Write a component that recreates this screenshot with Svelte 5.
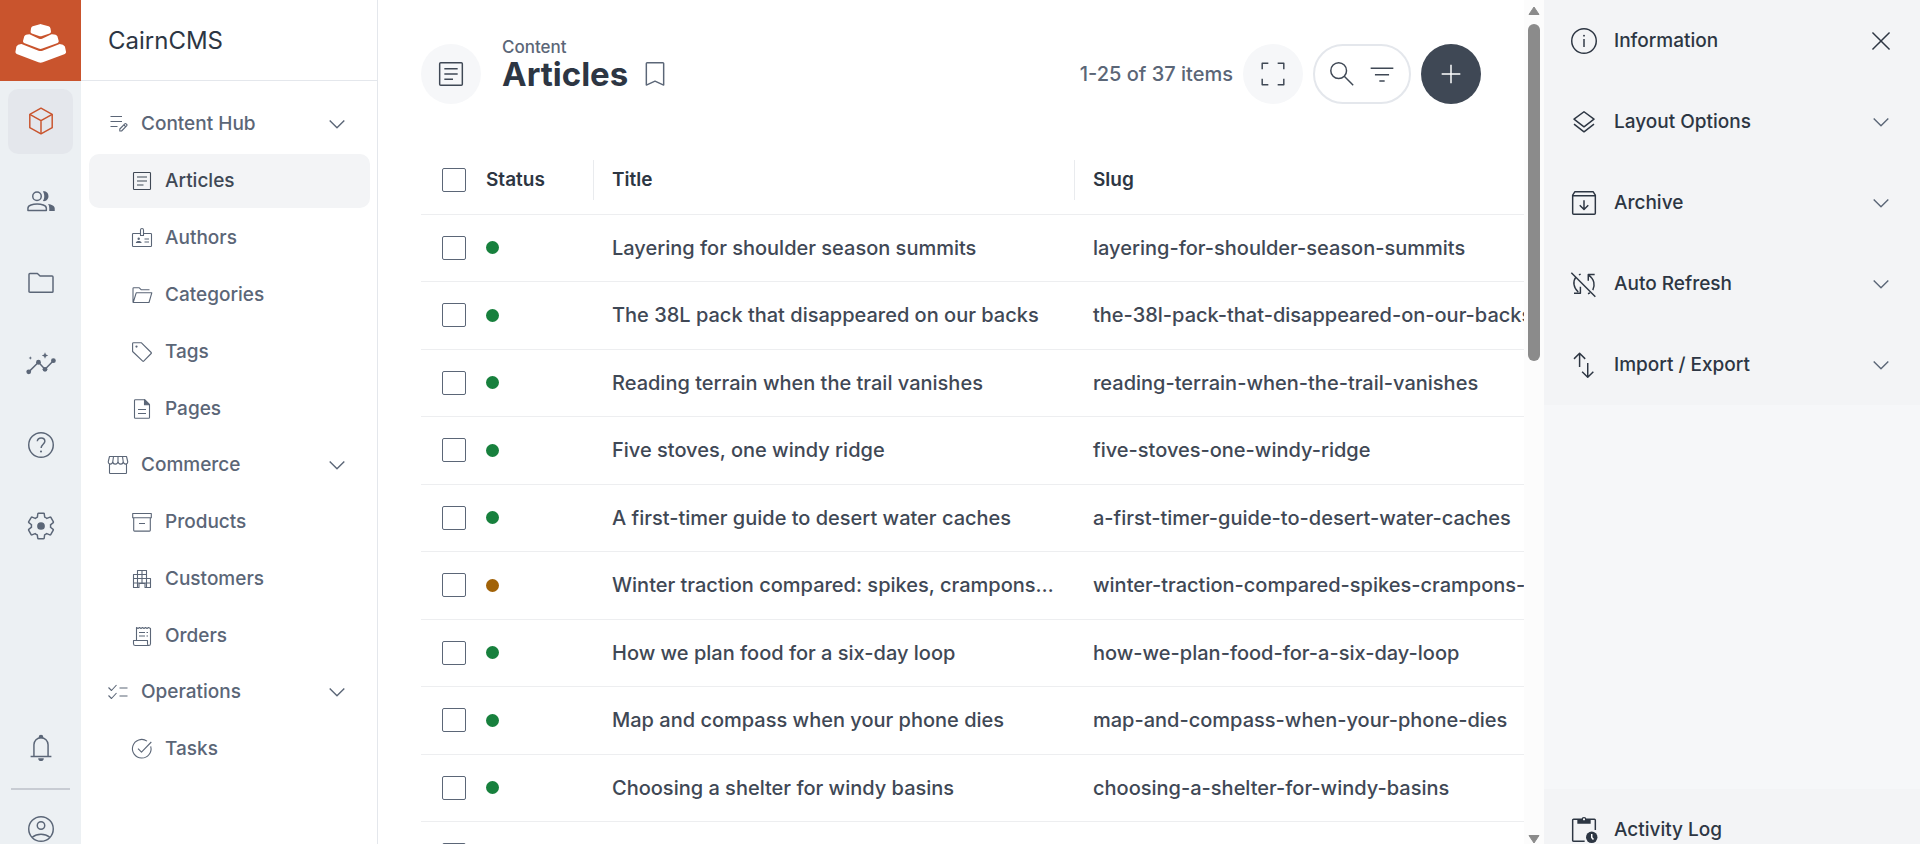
<script>
  const icons = {
    box: '<path d="M12 2.4 20.4 7v10L12 21.6 3.6 17V7z"/><path d="M3.6 7 12 11.8 20.4 7M12 11.8v9.8"/>',
    people:
      '<circle cx="9" cy="7.7" r="3.2"/><path d="M2.2 18.3v-1.7c0-2.2 3.8-3.1 6.9-3.1s6.9.9 6.9 3.1v1.7z"/><g fill="currentColor" stroke="none"><path d="M17.3 13.5c2.7.4 5 1.4 5 3.3v2h-4.1v-2.3c0-1.2-.3-2.2-.9-3zM13.4 4.1c2.8-.5 4.2 1.6 4.2 3.6s-1.5 4.1-4.2 3.6c1.4-1.8 1.4-5.4 0-7.2z"/></g>',
    folder:
      '<path d="M3 5.6c0-.4.3-.7.7-.7h5.6l2 1.9h9c.4 0 .7.3.7.7v10.8c0 .4-.3.7-.7.7H3.7a.7.7 0 0 1-.7-.7z"/>',
    insights:
      '<path d="m2.8 17.9 7.3-7.2 4.9 5.3 6.3-6.5"/><g fill="currentColor" stroke="none"><circle cx="2.8" cy="17.9" r="1.8"/><circle cx="10.1" cy="10.7" r="1.8"/><circle cx="15" cy="16" r="1.8"/><circle cx="21.3" cy="9.5" r="1.8"/><path d="m15 3.2.7 1.7 1.7.7-1.7.7-.7 1.7-.7-1.7-1.7-.7 1.7-.7zM4 6.2l.4.9.9.4-.9.4-.4.9-.4-.9-.9-.4.9-.4z"/></g>',
    help: '<circle cx="12" cy="12" r="9.2"/><path d="M9.2 9.2c.2-1.6 1.3-2.5 2.9-2.5s2.8 1 2.8 2.5c0 2.1-2.8 2.4-2.8 5"/><circle cx="12" cy="16.9" r=".8" fill="currentColor" stroke="none"/>',
    settings:
      '<path d="M19.1 12.9c.1-.3.1-.6.1-.9s0-.6-.1-.9l2.1-1.6c.1-.2.2-.4.1-.6l-1.9-3.4c-.2-.2-.4-.2-.6-.2l-2.4 1c-.5-.4-1-.7-1.6-1l-.4-2.5c0-.2-.2-.4-.5-.4h-3.8c-.2 0-.4.2-.5.4l-.3 2.5c-.6.3-1.2.6-1.6 1l-2.4-1c-.3 0-.5 0-.6.2L2.7 8.9c-.1.2 0 .4.2.6l2 1.6c-.1.3-.1.6-.1.9s0 .6.1.9l-2.1 1.6c-.1.2-.2.4-.1.6l1.9 3.4c.2.2.4.2.6.2l2.4-1c.5.4 1 .7 1.6 1l.4 2.5c0 .2.2.4.5.4h3.8c.3 0 .4-.2.5-.4l.3-2.5c.6-.3 1.2-.6 1.6-1l2.4 1c.3 0 .5 0 .6-.2l1.9-3.4c.1-.2.1-.4-.1-.6z"/><circle cx="12" cy="12" r="2.9" fill="currentColor" stroke="none"/>',
    bell: '<path d="M4.2 18.3h15.6M6.7 18.3V9.6a5.3 5.3 0 0 1 10.6 0v8.7"/><g fill="currentColor" stroke="none"><path d="M10.3 4.6v-.8a1.7 1.7 0 0 1 3.4 0v.8zM9.9 19.7h4.2a2.1 2.1 0 0 1-4.2 0z"/></g>',
    account:
      '<circle cx="12" cy="12" r="9.2"/><circle cx="12" cy="9.4" r="2.8"/><path d="M5.4 18.2c3.8-3 9.4-3 13.2 0"/>',
    editNote:
      '<path d="M4.5 4.5H16M4.5 9.5H16M4.5 14.5h7"/><path d="M13.8 19v-2l5-5.2a.9.9 0 0 1 1.3 0l.7.7c.3.3.3.8 0 1.1L15.6 19zM18 13l1.8 1.8"/>',
    article:
      '<rect x="3.5" y="3.5" width="17" height="17" rx=".8"/><path d="M7 8h10M7 12h10M7 16h6.5"/>',
    badge:
      '<path d="M10.5 7.5H3.3c-.4 0-.8.4-.8.8v11.4c0 .4.4.8.8.8h17.4c.4 0 .8-.4.8-.8V8.3c0-.4-.4-.8-.8-.8h-7.2"/><path d="M10.5 9.5V4c0-2 3-2 3 0v5.5zM14.5 13H19M14.5 16H19"/><g fill="currentColor" stroke="none"><circle cx="8.7" cy="12.8" r="1.2"/><path d="M5.8 17c.2-2.6 5.6-2.6 5.8 0z"/></g>',
    folderOpen:
      '<path d="M3 19.2V5.5c0-.5.3-.7.7-.7h5.6l2 2h8.2M3.2 19.5l3-9.7h15.6l-2.8 9.7z"/>',
    tag: '<path d="M2.6 11.5V3.6c0-.5.4-.9.9-.9h7.7l10 9.8c.3.3.3.7 0 1l-7.5 7.6c-.3.3-.7.3-1 0z"/><circle cx="6.5" cy="6.6" r="1.1" fill="currentColor" stroke="none"/>',
    page: '<path d="M14.5 2.7H5.3c-.5 0-.8.3-.8.8v17c0 .5.3.8.8.8h13.4c.5 0 .8-.3.8-.8V7.7zM8 12.5h8M8 16.5h8"/><path d="M14.5 2.7v5h5z" fill="currentColor"/>',
    store:
      '<path d="M3.5 10.5v9.3c0 .4.3.7.7.7h15.6c.4 0 .7-.3.7-.7v-9.3M3.5 3.5h17l1.2 5c.3 3.5-4 3.5-4.5 0 0 3.5-4.9 3.5-5.2 0-.3 3.5-5.2 3.5-5.2 0-.5 3.5-4.8 3.5-4.5 0zM7.5 3.5l-.7 5M12 3.5v5M16.5 3.5l.7 5"/>',
    archiveBox:
      '<path d="M2.7 3.5h18.6v4.2H2.7zM3.7 7.7v12.6c0 .5.3.8.8.8h15c.5 0 .8-.3.8-.8V7.7M9 13.5h6"/>',
    city: '<path d="M3.5 20.5v-13h4v-4h9v8h4v9H15v-4H9v4zM7.5 7.5h9M3.5 11.5h13M3.5 16h17M7.5 7.5v13M12 3.5v13M16.5 11.5v9"/>',
    receipt:
      '<path d="M6.5 16.5v-13l1.5 1 1.5-1 1.5 1 1.5-1 1.5 1 1.5-1 1.5 1 1.5-1 2 1v15.2c0 .9-.7 1.8-1.8 1.8H5.3c-1 0-1.8-.8-1.8-1.8v-3.2h14v3.2c0 1 .6 1.8 1.5 1.8M9 8.5h6M9 12h6M16.5 8.5H18M16.5 12H18"/>',
    checklist: '<path d="m2.5 7.5 3 3 5-5.5M2.5 15.5l3 3 5-5.5M13.5 8h8M13.5 16h8"/>',
    taskAlt: '<path d="M20.7 9.3A9.3 9.3 0 1 1 17 4.1M8 11.7l3.5 3.5L21.3 5"/>',
    chevron: '<path stroke-width="1.4" d="m4.7 8.500 7.300 7.300 7.300-7.300"/>',
    close: '<path d="m5.6 5.6 12.8 12.8M18.4 5.6 5.6 18.4"/>',
    bookmark: '<path d="M5.5 20.3V4.1c0-.4.2-.6.6-.6h11.8c.4 0 .6.2.6.6v16.2L12 17.4z"/>',
    fullscreen:
      '<path d="M3.9 8.5V3.9h4.6M15.5 3.9h4.6v4.6M20.1 15.5v4.6h-4.6M8.5 20.1H3.9v-4.6"/>',
    search: '<circle cx="9.5" cy="9.5" r="5.9"/><path d="m13.7 13.7 6.7 6.7"/>',
    filter: '<path d="M3.5 7.7h17M6.7 12.5h10.6M10 17.3h4"/>',
    plus: '<path d="M12 5v14M5 12h14"/>',
    info: '<circle cx="12" cy="12" r="9.2"/><path d="M12 10.5v6"/><circle cx="12" cy="8" r=".7" fill="currentColor" stroke="none"/>',
    layers: '<path d="m12 4.3 7.5 5.6-7.5 5.7-7.5-5.7zM4.5 13.6l7.5 5.8 7.5-5.8"/>',
    archive:
      '<path d="M5.2 3.5h13.6l1.7 2.6v13.6c0 .5-.3.8-.8.8H4.3c-.5 0-.8-.3-.8-.8V6.1zM3.5 6.6h17M12 10v6.8M8.8 13.7l3.2 3.2 3.2-3.2"/>',
    syncOff:
      '<path d="m2.5 3.5 18 18M5.9 6.8C3.5 10 4 14.7 7.7 18M4.5 18.9h4.8V14M9.5 4.6l-1.3.6M20 4.9h-4.8v4.6M15.4 5.3c4.5 3 5 7.7 3.2 11.3M16.5 18.6l-1.5.7"/>',
    swap: '<path d="M8.7 13.5V3.2M4.5 7.4l4.2-4.2 4.2 4.2M14.8 10.5v10.7M10.6 17l4.2 4.2L19 17"/>',
    activity:
      '<path d="M12.5 20.5H4.2c-.4 0-.7-.3-.7-.7V4.7c0-.4.3-.7.7-.7h15.6c.4 0 .7.3.7.7V12"/><g fill="currentColor" stroke="none"><path d="M7 4h3.2a1.8 1.8 0 0 1 3.6 0H17v3.4H7z"/><circle cx="17.8" cy="17.5" r="4.3"/></g><circle cx="12" cy="4" r=".8" fill="#fff" stroke="none"/><path d="M17.8 15v2.7l1.3 1.5" stroke="#fff"/>'
  };

  const modules = [
    { icon: 'box', label: 'Content', active: true },
    { icon: 'people', label: 'User Directory' },
    { icon: 'folder', label: 'File Library' },
    { icon: 'insights', label: 'Insights' },
    { icon: 'help', label: 'Documentation' },
    { icon: 'settings', label: 'Settings' }
  ];

  const groups = [
    {
      label: 'Content Hub',
      icon: 'editNote',
      items: [
        { label: 'Articles', icon: 'article', active: true },
        { label: 'Authors', icon: 'badge' },
        { label: 'Categories', icon: 'folderOpen' },
        { label: 'Tags', icon: 'tag' },
        { label: 'Pages', icon: 'page' }
      ]
    },
    {
      label: 'Commerce',
      icon: 'store',
      items: [
        { label: 'Products', icon: 'archiveBox' },
        { label: 'Customers', icon: 'city' },
        { label: 'Orders', icon: 'receipt' }
      ]
    },
    {
      label: 'Operations',
      icon: 'checklist',
      items: [{ label: 'Tasks', icon: 'taskAlt' }]
    }
  ];

  const rows = [
    { title: 'Layering for shoulder season summits', slug: 'layering-for-shoulder-season-summits' },
    { title: 'The 38L pack that disappeared on our backs', slug: 'the-38l-pack-that-disappeared-on-our-backs' },
    { title: 'Reading terrain when the trail vanishes', slug: 'reading-terrain-when-the-trail-vanishes' },
    { title: 'Five stoves, one windy ridge', slug: 'five-stoves-one-windy-ridge' },
    { title: 'A first-timer guide to desert water caches', slug: 'a-first-timer-guide-to-desert-water-caches' },
    {
      title: 'Winter traction compared: spikes, crampons, snowshoes',
      slug: 'winter-traction-compared-spikes-crampons-snowshoes',
      draft: true
    },
    { title: 'How we plan food for a six-day loop', slug: 'how-we-plan-food-for-a-six-day-loop' },
    { title: 'Map and compass when your phone dies', slug: 'map-and-compass-when-your-phone-dies' },
    { title: 'Choosing a shelter for windy basins', slug: 'choosing-a-shelter-for-windy-basins' },
    { title: '', slug: '' }
  ];

  const panels = [
    { label: 'Information', icon: 'info' },
    { label: 'Layout Options', icon: 'layers' },
    { label: 'Archive', icon: 'archive' },
    { label: 'Auto Refresh', icon: 'syncOff' },
    { label: 'Import / Export', icon: 'swap' }
  ];

  let closed = $state({});
  let selected = $state(rows.map(() => false));
  let allSelected = $derived(selected.every(Boolean));

  function toggleAll(e) {
    const checked = e.currentTarget.checked;
    selected = rows.map(() => checked);
  }
</script>

{#snippet icon(name, size = 32)}
  <svg class="icon" width={size} height={size} viewBox="0 0 24 24" aria-hidden="true">
    {@html icons[name]}
  </svg>
{/snippet}

<div class="app">
  <aside class="module-bar">
    <a class="logo" href="#home" aria-label="Home">
      <svg width="81" height="81" viewBox="0 0 81 81" aria-hidden="true">
        <path d="M39 24.4q1.5-.6 3 0l6.6 1.8q1.6.5 1.9 2.2l.5 3q.1 1.5-1.3 2l-7.7 2.6q-1.5.4-3 0l-7.2-2.6q-1.4-.5-1.2-2l.4-3q.3-1.7 1.7-2.2z" />
        <path d="m29.5 34.3 9.5 4.4q1.5.7 3 0l9.5-4.4q4.8-.2 5.9 2l1.3 4.7q.3 1.3-1 1.9L42.3 48.6q-1.8.7-3.6 0L24 42.9q-1.2-.6-1-1.9l1.2-4.5q1-2.2 5.3-2.2z" />
        <path d="m21.5 44.1 17 6.6q2 .7 4 0l17.2-6.6q3.8 0 5.2 2.5l1.2 5.4q0 1.3-1.2 1.900L42.800 62.300q-2.200.9-4.400 0L16.700 53.900q-1.300-.6-1.300-1.900l1-5.400q1.300-2.600 5.100-2.500z" />
      </svg>
    </a>
    <nav class="modules">
      {#each modules as mod}
        <a class="module" class:active={mod.active} href="#{mod.icon}" aria-label={mod.label}>
          {@render icon(mod.icon)}
        </a>
      {/each}
    </nav>
    <button class="bar-button" aria-label="Notifications">{@render icon('bell')}</button>
    <a class="bar-button profile" href="#profile" aria-label="Profile">{@render icon('account')}</a>
  </aside>

  <aside class="navigation">
    <header class="project">CairnCMS</header>
    <nav class="groups">
      {#each groups as group}
        <div class="group">
          <button class="nav-item" onclick={() => (closed[group.label] = !closed[group.label])}>
            {@render icon(group.icon, 24)}
            <span class="label">{group.label}</span>
            <span class="chevron" class:closed={closed[group.label]}>{@render icon('chevron', 24)}</span>
          </button>
          {#if !closed[group.label]}
            {#each group.items as item}
              <a class="nav-item child" class:active={item.active} href="#{item.label.toLowerCase()}">
                {@render icon(item.icon, 24)}
                <span class="label">{item.label}</span>
              </a>
            {/each}
          {/if}
        </div>
      {/each}
    </nav>
  </aside>

  <main class="content">
    <div class="page">
      <header class="header-bar">
        <span class="round">{@render icon('article')}</span>
        <div class="heading">
          <a class="breadcrumb" href="#content">Content</a>
          <h1>Articles</h1>
        </div>
        <button class="bookmark" aria-label="Bookmark">{@render icon('bookmark')}</button>
        <div class="actions">
          <span class="count">1-25 of 37 items</span>
          <button class="round" aria-label="Full screen">{@render icon('fullscreen')}</button>
          <div class="search">
            <button aria-label="Search">{@render icon('search')}</button>
            <button aria-label="Filter">{@render icon('filter')}</button>
          </div>
          <button class="round primary" aria-label="Create item">{@render icon('plus')}</button>
        </div>
      </header>

      <div class="table-wrap">
        <table>
          <colgroup>
            <col class="col-select" />
            <col class="col-status" />
            <col class="col-title" />
            <col />
          </colgroup>
          <thead>
            <tr>
              <th class="select">
                <input type="checkbox" aria-label="Select all" checked={allSelected} onchange={toggleAll} />
              </th>
              <th><span>Status</span></th>
              <th><span>Title</span></th>
              <th><span>Slug</span></th>
            </tr>
          </thead>
          <tbody>
            {#each rows as row, i}
              <tr>
                <td class="select">
                  <input type="checkbox" aria-label="Select row {i + 1}" bind:checked={selected[i]} />
                </td>
                <td><span class="dot" class:draft={row.draft}></span></td>
                <td>{row.title}</td>
                <td>{row.slug}</td>
              </tr>
            {/each}
          </tbody>
        </table>
      </div>
    </div>

    <div class="scrollbar" aria-hidden="true">
      <svg width="12" height="10" viewBox="0 0 12 10"><path d="M6 1 11 8.5H1z" /></svg>
      <div class="track"><div class="thumb"></div></div>
      <svg width="12" height="10" viewBox="0 0 12 10"><path d="M6 9 11 1.5H1z" /></svg>
    </div>
  </main>

  <aside class="sidebar">
    <div class="panels">
      {#each panels as panel, i}
        <div class="panel">
          <button class="panel-toggle">
            {@render icon(panel.icon)}
            <span class="label">{panel.label}</span>
            {#if i > 0}
              <span class="chevron">{@render icon('chevron', 24)}</span>
            {/if}
          </button>
          {#if i === 0}
            <button class="close" aria-label="Close sidebar">{@render icon('close')}</button>
          {/if}
        </div>
      {/each}
    </div>
    <div class="panel">
      <button class="panel-toggle">
        {@render icon('activity')}
        <span class="label">Activity Log</span>
      </button>
    </div>
  </aside>
</div>

<style>
  :global(body) {
    overflow: hidden;
  }

  .app {
    --text: #3f4855;
    --text-strong: #2d3643;
    --text-subdued: #5b6677;
    --line: #e4e7ec;
    --soft: #f3f4f6;

    display: flex;
    height: 100vh;
    font-family: Inter, "Liberation Sans", sans-serif;
    font-size: 20px;
    font-weight: 500;
    line-height: 28px;
    color: var(--text);
    background: #fff;
  }

  .app :where(button) {
    border: 0;
    padding: 0;
    background: none;
    font: inherit;
    color: inherit;
    cursor: pointer;
  }

  a {
    color: inherit;
    text-decoration: none;
  }

  .icon {
    display: block;
    flex-shrink: 0;
    fill: none;
    stroke: currentColor;
    stroke-width: 1.1;
    stroke-linejoin: round;
  }

  /* the last entry of both outer bars runs below the fold */
  .module-bar,
  .sidebar {
    height: calc(100vh + 26px);
    display: flex;
    flex-direction: column;
    flex-shrink: 0;
  }

  .module-bar {
    width: 81px;
    background: #ecf0f3;
    color: var(--text-subdued);
  }

  .logo {
    height: 81px;
    background: #c9542d;
    fill: #fff;
  }

  .logo svg {
    display: block;
  }

  .modules {
    flex: 1;
    display: flex;
    flex-direction: column;
    gap: 16px;
    padding: 8px;
  }

  .module {
    box-sizing: border-box;
    height: 65px;
    display: grid;
    place-items: center;
    padding-bottom: 1px;
    border-radius: 10px;
  }

  .module.active {
    background: #e4e7ec;
    color: #c9542d;
  }

  .module-bar .bar-button {
    box-sizing: border-box;
    height: 81px;
    display: grid;
    place-items: center;
    padding-bottom: 1px;
  }

  .profile {
    position: relative;
  }

  .profile::before {
    content: '';
    position: absolute;
    top: -1px;
    left: 11px;
    right: 11px;
    height: 2px;
    background: #c8ccd3;
  }

  .navigation {
    width: 296px;
    flex-shrink: 0;
    border-right: 1px solid var(--line);
    font-size: 19px;
    color: var(--text-subdued);
  }

  .project {
    box-sizing: border-box;
    height: 81px;
    display: flex;
    align-items: center;
    padding: 2px 0 0 27px;
    border-bottom: 1px solid var(--line);
    font-size: 24px;
    font-weight: 400;
    color: var(--text-strong);
  }

  .groups {
    display: flex;
    flex-direction: column;
    gap: 2px;
    padding: 16px 7px 0 8px;
  }

  .group {
    display: flex;
    flex-direction: column;
    gap: 3px;
  }

  .group .nav-item {
    height: 54px;
    display: flex;
    align-items: center;
    gap: 11px;
    padding: 0 21px 0 17px;
    border-radius: 10px;
    text-align: left;
  }

  .group .child {
    padding-left: 41px;
  }

  .nav-item.active {
    background: var(--soft);
    color: var(--text);
  }

  .label {
    flex: 1;
    text-align: left;
  }

  .chevron.closed {
    transform: rotate(90deg);
  }

  .content {
    flex: 1;
    min-width: 0;
    display: flex;
  }

  .page {
    flex: 1;
    min-width: 0;
    overflow: hidden;
    padding: 44px 0 0 43px;
  }

  .header-bar {
    display: flex;
    align-items: center;
    margin-bottom: 42px;
    padding-right: 43px;
  }

  .header-bar .round {
    width: 60px;
    height: 60px;
    display: grid;
    place-items: center;
    border-radius: 50%;
    background: #f6f7f9;
  }

  .header-bar .primary {
    background: var(--text);
    color: #fff;
  }

  .heading {
    display: flex;
    flex-direction: column;
    margin: -20px 11px 0 21px;
  }

  .breadcrumb {
    font-size: 17px;
    line-height: 20px;
    color: var(--text-subdued);
  }

  h1 {
    margin: 0;
    font-size: 33px;
    line-height: 34px;
    font-weight: 700;
    color: var(--text-strong);
  }

  .bookmark {
    color: var(--text-subdued);
  }

  .actions {
    display: flex;
    align-items: center;
    gap: 10px;
    margin-left: auto;
  }

  .count {
    color: var(--text-subdued);
    white-space: nowrap;
  }

  .search {
    height: 56px;
    display: flex;
    align-items: center;
    gap: 8px;
    padding: 0 11px;
    border: 2px solid var(--line);
    border-radius: 30px;
  }

  .table-wrap {
    overflow: hidden;
  }

  table {
    width: 1200px;
    min-width: 100%;
    table-layout: fixed;
    border-collapse: collapse;
  }

  .col-select {
    width: 47px;
  }

  .col-status {
    width: 126px;
  }

  .col-title {
    width: 481px;
  }

  tr {
    height: 67px;
  }

  thead tr,
  tbody tr:nth-child(even) {
    height: 68px;
  }

  th,
  td {
    padding: 0 18px;
    border-bottom: 1px solid #edeef0;
    overflow: hidden;
    text-align: left;
    text-overflow: ellipsis;
    white-space: nowrap;
  }

  th {
    padding-right: 0;
    font-size: 19px;
    font-weight: 600;
    color: var(--text-strong);
  }

  th span {
    display: block;
    line-height: 40px;
    border-right: 1px solid #e9ebee;
  }

  .select {
    padding: 0 0 0 21px;
  }

  input {
    appearance: none;
    box-sizing: border-box;
    display: block;
    width: 24px;
    height: 24px;
    margin: 0;
    border: 1px solid var(--text-subdued);
    border-radius: 2px;
    background: #fff;
  }

  input:checked {
    background: var(--text-subdued);
    box-shadow: inset 0 0 0 4px #fff;
  }

  .dot {
    display: block;
    width: 13px;
    height: 13px;
    border-radius: 50%;
    background: #17803d;
  }

  .dot.draft {
    background: #a16207;
  }

  .scrollbar {
    width: 12px;
    display: flex;
    flex-direction: column;
    justify-content: space-between;
    padding: 6px 4px 0;
    background: #fcfcfc;
    fill: #8b8b8b;
    stroke: #8b8b8b;
    stroke-linejoin: round;
  }

  .scrollbar svg {
    display: block;
  }

  .track {
    flex: 1;
    padding: 8px 0;
  }

  .thumb {
    height: 42%;
    border-radius: 6px;
    background: #8b8b8b;
  }

  .sidebar {
    width: 376px;
    justify-content: space-between;
    background: #f6f7f9;
    font-size: 19px;
    color: var(--text-strong);
  }

  .panel {
    box-sizing: border-box;
    height: 81px;
    display: flex;
    align-items: center;
    padding: 0 23px 0 24px;
    background: var(--soft);
  }

  .panel-toggle {
    flex: 1;
    height: 100%;
    display: flex;
    align-items: center;
    gap: 14px;
  }

  .sidebar .chevron {
    padding-right: 4px;
    color: var(--text-subdued);
  }
</style>
